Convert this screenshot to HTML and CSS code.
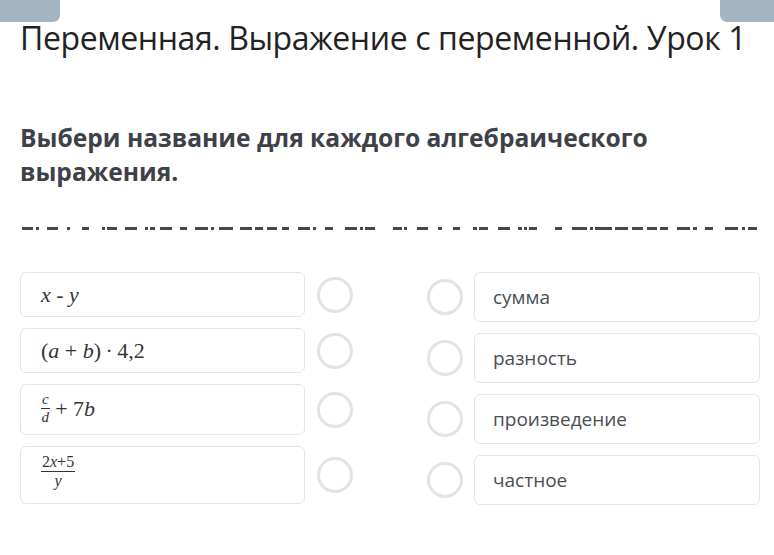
FILE: index.html
```html
<!DOCTYPE html>
<html lang="ru">
<head>
<meta charset="utf-8">
<title>Переменная. Выражение с переменной. Урок 1</title>
<link rel="stylesheet" href="styles.css">
</head>
<body>
<div class="topbar">
  <div class="tbtn tbtn-left"></div>
  <div class="tbtn tbtn-right"></div>
</div>
<h1 class="title">Переменная. Выражение с переменной. Урок 1</h1>
<h2 class="question">Выбери название для каждого алгебраического выражения.</h2>
<svg class="divider" width="774" height="6" viewBox="0 0 774 6">
  <g fill="#45484d">
    <rect x="22" y="1" width="11" height="3"/><rect x="36" y="1" width="3" height="3"/><rect x="47" y="1" width="11" height="3"/><rect x="67" y="1" width="3" height="3"/><rect x="82" y="1" width="7" height="3"/><rect x="102" y="1" width="3" height="3"/><rect x="107" y="1" width="10" height="3"/><rect x="125" y="1" width="12" height="3"/><rect x="145" y="1" width="3" height="3"/><rect x="150" y="1" width="5" height="3"/><rect x="160" y="1" width="12" height="3"/><rect x="180" y="1" width="7" height="3"/><rect x="195" y="1" width="13" height="3"/><rect x="211" y="1" width="3" height="3"/><rect x="219" y="1" width="14" height="3"/><rect x="240" y="1" width="12" height="3"/><rect x="255" y="1" width="8" height="3"/><rect x="267" y="1" width="10" height="3"/><rect x="282" y="1" width="7" height="3"/><rect x="298" y="1" width="12" height="3"/><rect x="313" y="1" width="3" height="3"/><rect x="325" y="1" width="8" height="3"/><rect x="345" y="1" width="12" height="3"/><rect x="360" y="1" width="3" height="3"/><rect x="365" y="1" width="10" height="3"/>
    <rect x="393" y="1" width="9" height="3"/><rect x="404" y="1" width="3" height="3"/><rect x="417" y="1" width="11" height="3"/><rect x="438" y="1" width="4" height="3"/><rect x="453" y="1" width="7" height="3"/><rect x="473" y="1" width="4" height="3"/><rect x="479" y="1" width="9" height="3"/><rect x="498" y="1" width="12" height="3"/><rect x="518" y="1" width="4" height="3"/><rect x="524" y="1" width="3" height="3"/><rect x="529" y="1" width="8" height="3"/><rect x="555" y="1" width="7" height="3"/><rect x="572" y="1" width="15" height="3"/><rect x="590" y="1" width="3" height="3"/><rect x="595" y="1" width="17" height="3"/><rect x="615" y="1" width="13" height="3"/><rect x="632" y="1" width="11" height="3"/><rect x="647" y="1" width="10" height="3"/><rect x="660" y="1" width="8" height="3"/><rect x="677" y="1" width="13" height="3"/><rect x="693" y="1" width="4" height="3"/><rect x="705" y="1" width="8" height="3"/><rect x="725" y="1" width="13" height="3"/><rect x="742" y="1" width="3" height="3"/><rect x="748" y="1" width="9" height="3"/>
  </g>
</svg>
<div class="match">
  <div class="col col-left">
    <div class="row row-1">
      <div class="card"><span class="math"><i>x</i>&nbsp;-&nbsp;<i>y</i></span></div>
      <span class="radio"></span>
    </div>
    <div class="row row-2">
      <div class="card"><span class="math">(<i>a</i>&nbsp;+&nbsp;<i>b</i>)&thinsp;·&thinsp;4,2</span></div>
      <span class="radio"></span>
    </div>
    <div class="row row-3">
      <div class="card card-top"><span class="math"><span class="frac frac-small"><span class="num"><i>c</i></span><span class="den"><i>d</i></span></span>&nbsp;+&nbsp;7<i>b</i></span></div>
      <span class="radio"></span>
    </div>
    <div class="row row-4">
      <div class="card card-top"><span class="math"><span class="frac frac-big"><span class="num">2<i>x</i>+5</span><span class="den"><i>y</i></span></span></span></div>
      <span class="radio"></span>
    </div>
  </div>
  <div class="col col-right">
    <div class="row row-r">
      <span class="radio"></span>
      <div class="card word">сумма</div>
    </div>
    <div class="row row-r">
      <span class="radio"></span>
      <div class="card word">разность</div>
    </div>
    <div class="row row-r">
      <span class="radio"></span>
      <div class="card word">произведение</div>
    </div>
    <div class="row row-r">
      <span class="radio"></span>
      <div class="card word">частное</div>
    </div>
  </div>
</div>
</body>
</html>
```
FILE: styles.css
```css
* { box-sizing: border-box; }
html, body { margin: 0; padding: 0; background: #fff; }
body {
  width: 774px;
  height: 555px;
  overflow: hidden;
  font-family: "Open Sans", "Noto Sans", sans-serif;
  color: #2b2e33;
}
.topbar {
  display: flex;
  justify-content: space-between;
  height: 22px;
}
.tbtn {
  height: 22px;
  background: #a4b5c1;
}
.tbtn-left { width: 60px; border-radius: 0 0 7px 0; }
.tbtn-right { width: 54px; border-radius: 0 0 0 7px; }
.title {
  margin: -4px 0 0;
  padding: 0 0 0 20px;
  font-weight: 400;
  font-size: 32px;
  line-height: 40px;
  letter-spacing: -0.4px;
  color: #222;
}
.question {
  margin: 63px 0 0;
  padding: 0 20px;
  font-weight: 700;
  font-size: 24.6px;
  line-height: 34px;
  color: #3d4148;
  width: 720px;
}
.divider {
  display: block;
  margin-top: 37px;
}
.match {
  display: flex;
  margin-top: 40px;
  padding: 0 14px 0 20px;
  justify-content: space-between;
}
.col {
  display: flex;
  flex-direction: column;
  gap: 11px;
}
.row {
  display: flex;
  align-items: center;
}
.col-left .row { gap: 12px; }
.col-right .row { gap: 11px; }
.card {
  border: 1px solid #e3e5e8;
  border-radius: 6px;
  background: #fff;
  display: flex;
  align-items: center;
}
.col-left .card {
  width: 285px;
  padding-left: 20px;
}
.row-1 .card, .row-2 .card { height: 45px; }
.row-3 .card { height: 51px; }
.row-4 .card { height: 58px; }
.card-top { align-items: flex-start; }
.row-3 .card-top { padding-top: 7px; }
.row-4 .card-top { padding-top: 7px; }
.radio {
  width: 36px;
  height: 36px;
  border-radius: 50%;
  border: 3px solid #e1e3e5;
  flex: none;
}
.col-right .card {
  width: 286px;
  height: 50px;
  padding-left: 18px;
}
.word {
  font-size: 19px;
  color: #4a4d52;
}
.math {
  font-family: "Liberation Serif", "DejaVu Serif", serif;
  font-size: 22px;
  color: #333;
  display: inline-flex;
  align-items: center;
  line-height: 1;
}
.math i { font-style: italic; }
.frac {
  display: inline-flex;
  flex-direction: column;
  align-items: center;
  line-height: 1;
}
.frac .num { border-bottom: 1px solid #333; padding: 0 1px 1px; }
.frac .den { padding-top: 1px; }
.frac-small { font-size: 15px; }
.frac-big { font-size: 16px; }
```
